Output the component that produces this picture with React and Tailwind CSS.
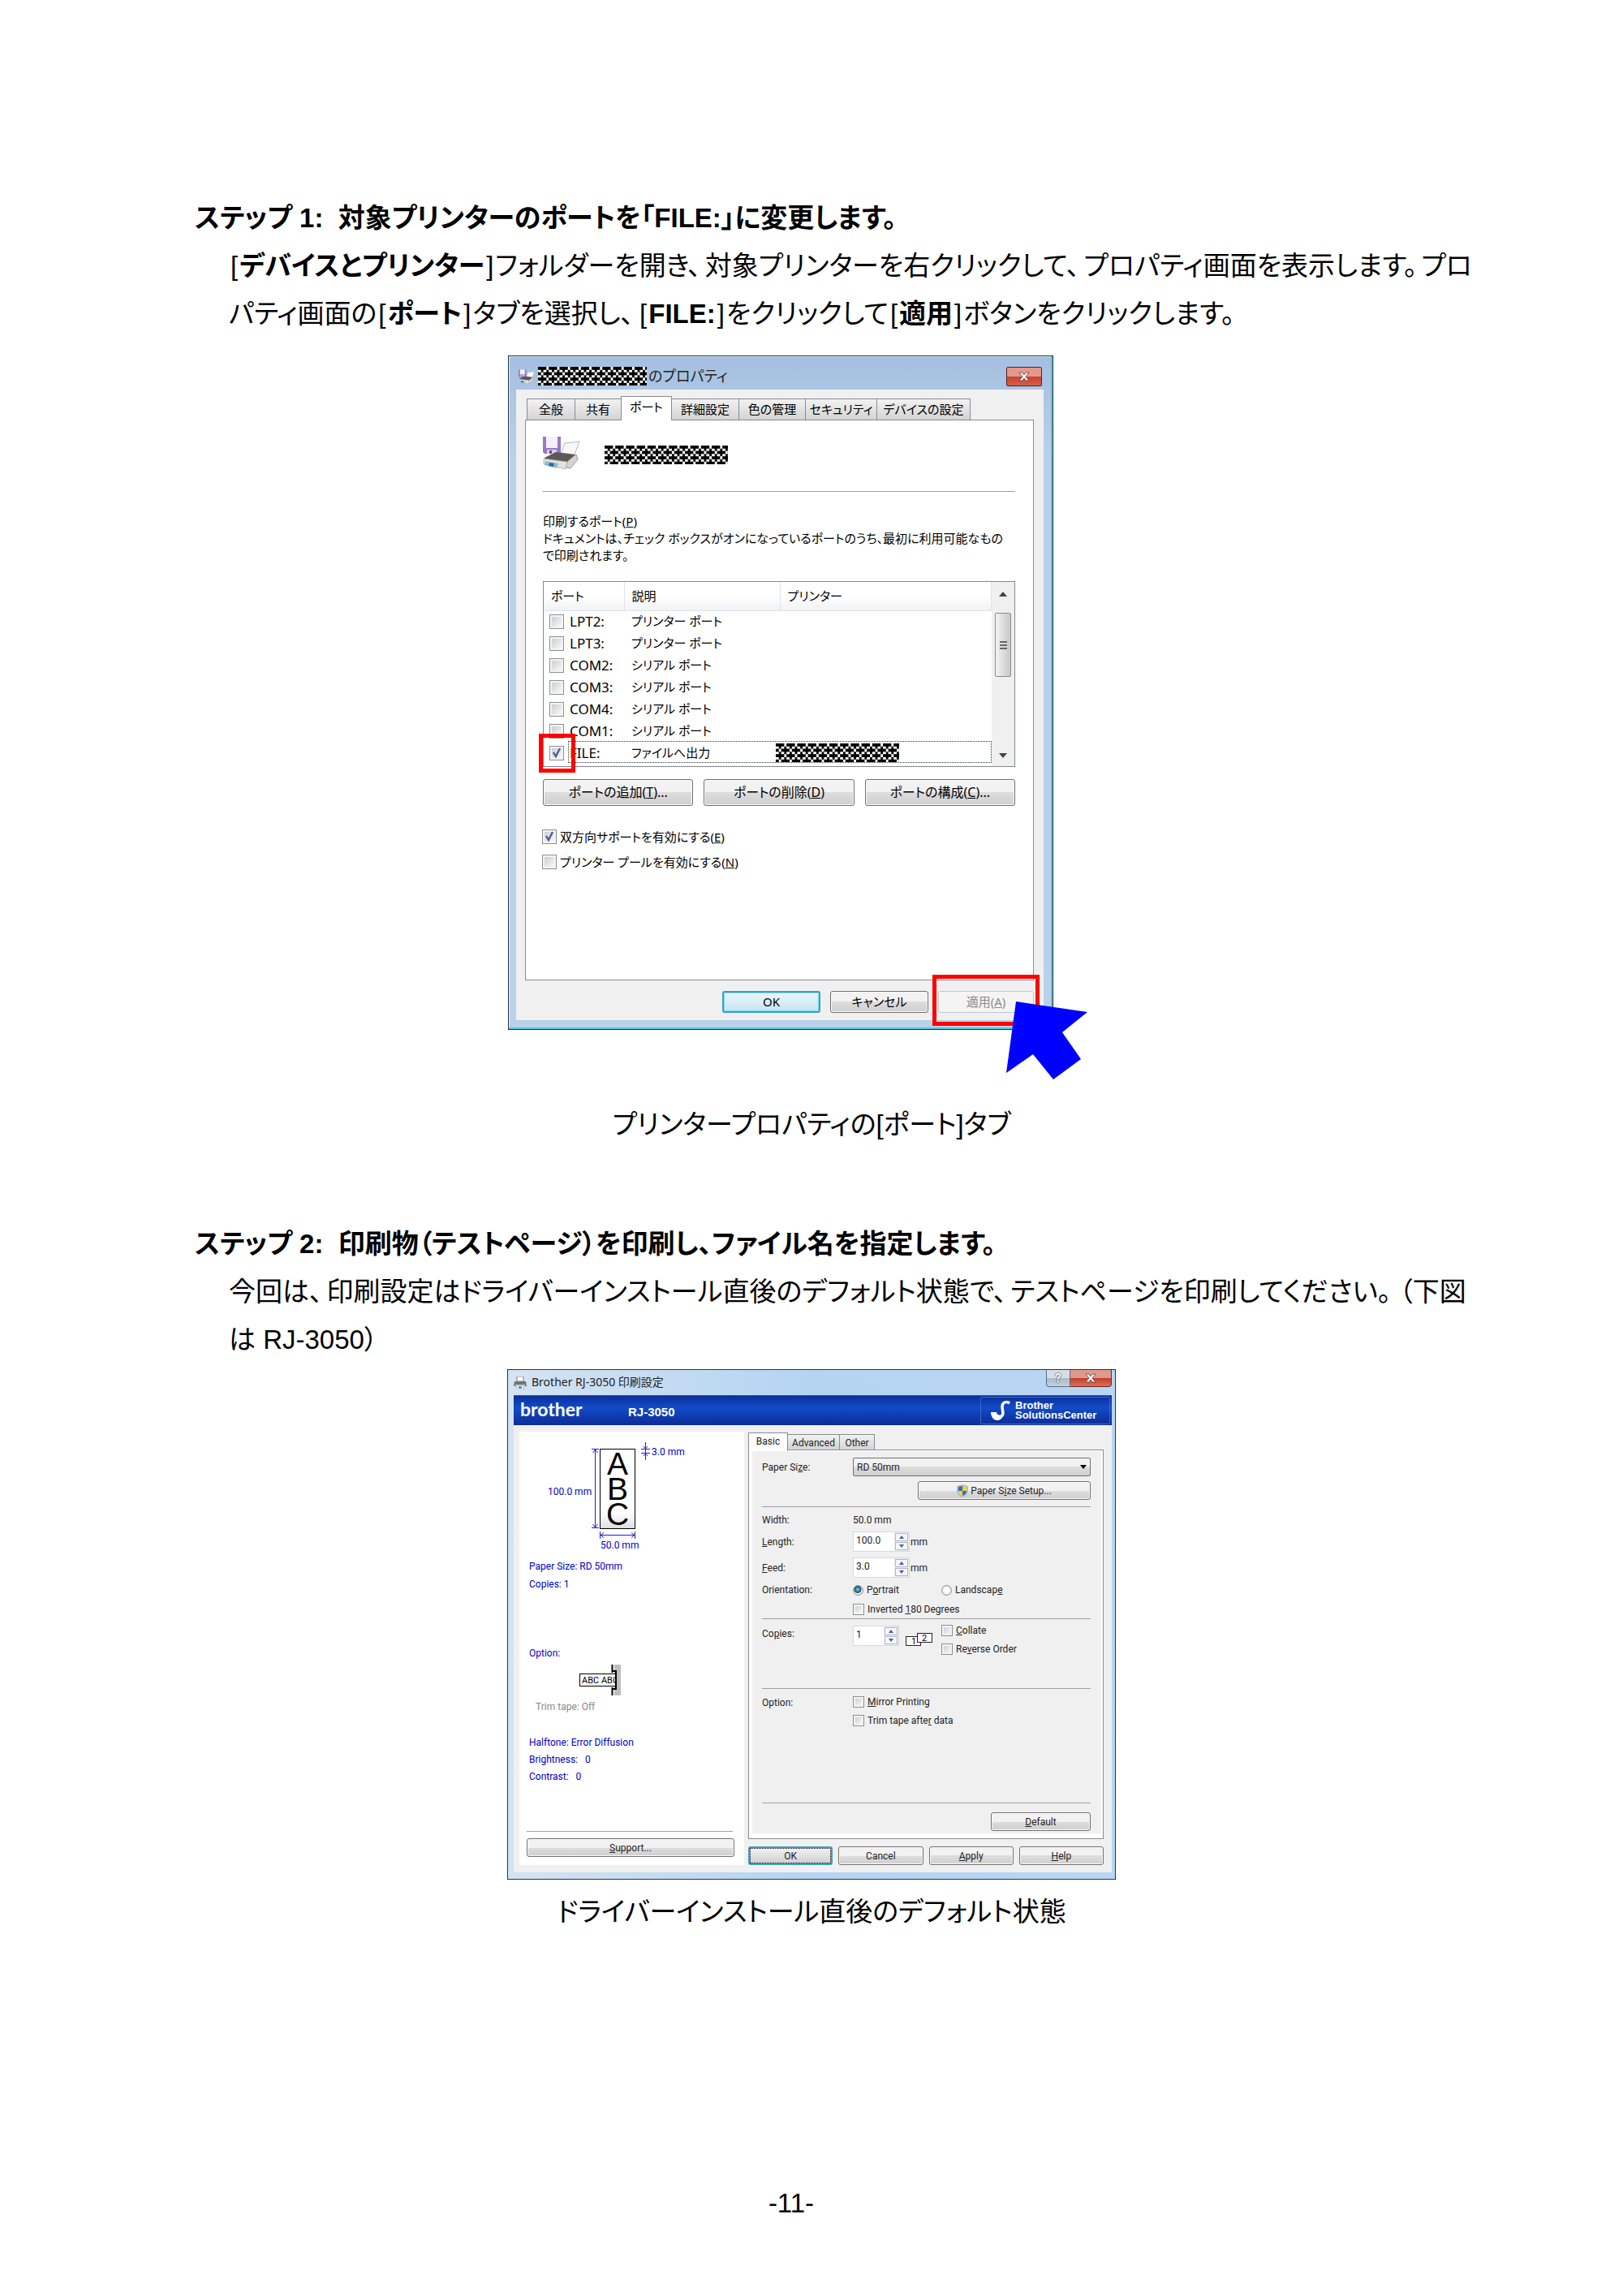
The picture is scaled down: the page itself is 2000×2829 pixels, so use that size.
const PORTS = [
  { name: "LPT2:", desc: "プリンター ポート" },
  { name: "LPT3:", desc: "プリンター ポート" },
  { name: "COM2:", desc: "シリアル ポート" },
  { name: "COM3:", desc: "シリアル ポート" },
  { name: "COM4:", desc: "シリアル ポート" },
  { name: "COM1:", desc: "シリアル ポート" },
  { name: "FILE:", desc: "ファイルへ出力", selected: true },
];

const PROPERTY_TABS = [
  { label: "全般", width: "w-[60px]" },
  { label: "共有", width: "w-[58px]" },
  { label: "ポート", width: "w-[63px]", active: true },
  { label: "詳細設定", width: "w-[84px]" },
  { label: "色の管理", width: "w-[83px]" },
  { label: "セキュリティ", width: "w-[89px]" },
  { label: "デバイスの設定", width: "w-[116px]" },
];

// Gives brackets and punctuation in running text some air of their own.
function Prose({ children }) {
  return children.split(/([[\]、。（])/).map((part, i) => {
    if (part === "[" || part === "]") {
      return (
        <span key={i} className="mx-[2px]">
          {part}
        </span>
      );
    }
    if (part === "（") {
      return (
        <span key={i} className="ml-[5px]">
          {part}
        </span>
      );
    }
    if (part === "、" || part === "。") {
      return (
        <span key={i} className="mr-[5px]">
          {part}
        </span>
      );
    }
    return part;
  });
}

function Mask({ id, className }) {
  return (
    <svg className={className} aria-hidden="true" shapeRendering="crispEdges">
      <defs>
        <pattern id={id} width="4" height="4" patternUnits="userSpaceOnUse" patternTransform="scale(3.3)">
          <rect width="4" height="4" fill="#000" />
          <path d="M3 0h1v1h-1zM0 1h1v1h-1zM2 1h1v1h-1zM1 2h1v1h-1zM0 3h1v1h-1zM2 3h1v1h-1z" fill="#fff" />
        </pattern>
      </defs>
      <rect width="100%" height="100%" fill={`url(#${id})`} />
    </svg>
  );
}

function CheckBox({ id, checked, className = "w-[18px] h-[18px]" }) {
  return (
    <span className="inline-grid shrink-0">
      <input
        id={id}
        type="checkbox"
        defaultChecked={checked}
        className={`peer appearance-none [grid-area:1/1] border border-[#8e8f8f] bg-linear-to-br from-[#c4c8cc] to-white shadow-[inset_0_0_0_2px_#f4f4f4] ${className}`}
      />
      <svg
        viewBox="0 0 18 18"
        className={`[grid-area:1/1] pointer-events-none opacity-0 peer-checked:opacity-100 ${className}`}
      >
        <path d="M5 8l3 5 5-10" fill="none" stroke="#4a5f97" strokeWidth="2.4" />
      </svg>
    </span>
  );
}

function WinButton({ children, className = "" }) {
  return (
    <button
      className={`border border-[#707070] rounded-[3px] bg-linear-to-b from-[#f2f2f2] from-50% via-[#dddddd] via-50% to-[#cfcfcf] shadow-[inset_0_0_0_1px_#fafafa] whitespace-nowrap ${className}`}
    >
      {children}
    </button>
  );
}

function CloseGlyph() {
  return (
    <svg viewBox="0 0 14 12" className="w-[14px] h-3">
      <path d="M1 1h4l2 3 2-3h4L9 6l4 5H9L7 8l-2 3H1l4-5z" fill="#fff" stroke="#5b3a3a" strokeWidth="0.8" />
    </svg>
  );
}

function FilePrinterIcon({ className }) {
  return (
    <svg viewBox="0 0 46 42" className={className} aria-hidden="true">
      <path d="M0 1h22v21H2l-2-2z" fill="#9a78c4" />
      <path d="M4 1h14v14H4z" fill="#f4f0fa" />
      <path d="M5 17h12v5H5z" fill="#d9cdea" />
      <path d="M8 18h3v4H8z" fill="#6a469c" />
      <path d="M27 9l18-2-7 19-16-3z" fill="#f7f7f7" stroke="#b9b9b9" />
      <path d="M2 27l14-7 24 3-10 9-27-2z" fill="#5c5856" />
      <path d="M30 32l11-9 2 6-9 11-6-1z" fill="#d4d4d4" stroke="#999" />
      <path d="M1 28l29 4-2 9-27-6z" fill="#e2e2e2" stroke="#999" strokeWidth="0.6" />
      <path d="M3 31l16 3-2 6-15-4z" fill="#8dbcd6" />
      <path d="M8 33l6 1-1 4-6-1z" fill="#2d6d9c" />
    </svg>
  );
}

function PropertiesDialog() {
  return (
    <section className="relative ml-px w-[672px] border border-[#20323e] bg-linear-to-b from-[#a4bfe0] from-0% to-[#b9d1ea] to-15% pl-[9px] pr-[11px] pb-[11px] shadow-[inset_-2px_-2px_0_#59c4dc,inset_1px_1px_0_#dcebf8] text-[16px] leading-[21px] text-black [font-family:'Noto_Sans','Noto_Sans_CJK_JP',sans-serif] [font-feature-settings:'palt']">
      <header className="h-[41px] flex items-center pl-[3px] pr-[2px] pt-2">
        <FilePrinterIcon className="w-5 h-[22px] shrink-0" />
        <Mask id="mask-title" className="ml-1 w-[134px] h-[23px] shrink-0" />
        <h2 className="ml-[2px] flex-1 text-[18px] text-[#222]">のプロパティ</h2>
        <button
          aria-label="閉じる"
          className="w-11 h-6 flex items-center justify-center rounded-[2px] border border-[#5a2020] bg-linear-to-b from-[#e5978b] from-50% via-[#c8402c] via-50% to-[#d4604a]"
        >
          <CloseGlyph />
        </button>
      </header>

      <div className="bg-[#f0f0f0] pl-[11px] pr-3 pt-2">
        <div role="tablist" className="h-[29px] flex items-end pl-[3px] text-[15px]">
          {PROPERTY_TABS.map((tab) => (
            <button
              key={tab.label}
              role="tab"
              aria-selected={Boolean(tab.active)}
              className={`${tab.width} -ml-px border border-b-0 border-[#898c95] whitespace-nowrap ${
                tab.active
                  ? "h-[30px] -mb-px relative bg-white pb-1"
                  : "h-[26px] bg-linear-to-b from-[#f2f2f2] to-[#d4d4d4]"
              }`}
            >
              {tab.label}
            </button>
          ))}
        </div>

        <div className="h-[691px] bg-white border border-[#898c95] pl-[21px] pr-[22px]">
          <div className="pt-[19px] flex">
            <FilePrinterIcon className="w-[46px] h-[42px]" />
            <Mask id="mask-name" className="ml-[30px] mt-3 w-[152px] h-[23px]" />
          </div>
          <hr className="mt-[26px] border-[#a0a0a0]" />

          <div className="mt-[26px] text-[15px] whitespace-nowrap">
            <p>
              印刷するポート(<u>P</u>)
            </p>
            <p>
              ドキュメントは、チェック ボックスがオンになっているポートのうち、最初に利用可能なもの
              <br />
              で印刷されます。
            </p>
          </div>

          <div className="relative mt-[21px] h-[229px] border border-[#828790] flex">
            <table className="flex-1 self-start table-fixed border-collapse text-left text-[15px]">
              <thead>
                <tr className="h-[35px] bg-linear-to-b from-white from-50% to-[#f1f2f4]">
                  <th className="w-[99px] p-0 pl-[9px] font-normal border-r border-b border-[#e0e3e8]">ポート</th>
                  <th className="w-[192px] p-0 pl-[9px] font-normal border-r border-b border-[#e0e3e8]">説明</th>
                  <th className="p-0 pl-[9px] font-normal border-r border-b border-[#e0e3e8]">プリンター</th>
                </tr>
              </thead>
              <tbody>
                {PORTS.map((port) => (
                  <tr key={port.name} className="h-[27px]">
                    <td className="p-0 pl-[7px]">
                      <span className="flex items-center gap-[7px] text-[17px]">
                        <CheckBox id={port.name} checked={port.selected} />
                        <label htmlFor={port.name}>{port.name}</label>
                      </span>
                    </td>
                    <td className="p-0 pl-[9px] whitespace-nowrap">{port.desc}</td>
                    <td className="p-0">
                      {port.selected && <Mask id="mask-port" className="-ml-[5px] w-[152px] h-[23px]" />}
                    </td>
                  </tr>
                ))}
              </tbody>
            </table>
            <div className="w-7 bg-[#f0f0f0] flex flex-col items-center pb-[10px] pt-3 px-1">
              <svg viewBox="0 0 10 6" className="w-[10px] h-[6px]">
                <path d="M0 6l5-6 5 6z" fill="#444" />
              </svg>
              <div className="mt-5 w-full h-[79px] border border-[#8b8b8b] rounded-[2px] bg-linear-to-r from-[#f3f3f3] to-[#c8c8cc] flex flex-col items-center justify-center gap-[2px]">
                <i className="w-[9px] h-[2px] bg-[#666]" />
                <i className="w-[9px] h-[2px] bg-[#666]" />
                <i className="w-[9px] h-[2px] bg-[#666]" />
              </div>
              <svg viewBox="0 0 10 6" className="mt-auto w-[10px] h-[6px]">
                <path d="M0 0l5 6 5-6z" fill="#444" />
              </svg>
            </div>
            <div className="absolute left-[30px] right-7 bottom-[4px] h-[27px] border border-dotted border-[#333]" />
            <div className="absolute -left-[6px] -bottom-2 w-[45px] h-12 border-[5px] border-[#f00]" />
          </div>

          <div className="mt-[15px] grid grid-cols-3 gap-[13px]">
            <WinButton className="h-[33px]">
              ポートの追加(<u>T</u>)...
            </WinButton>
            <WinButton className="h-[33px]">
              ポートの削除(<u>D</u>)
            </WinButton>
            <WinButton className="h-[33px]">
              ポートの構成(<u>C</u>)...
            </WinButton>
          </div>

          <div className="mt-[25px] flex flex-col gap-[5px] -ml-px text-[15px] leading-[26px]">
            <div className="flex items-center gap-1">
              <CheckBox id="bidi" checked />
              <label htmlFor="bidi">
                双方向サポートを有効にする(<u>E</u>)
              </label>
            </div>
            <div className="flex items-center gap-1">
              <CheckBox id="pool" />
              <label htmlFor="pool">
                プリンター プールを有効にする(<u>N</u>)
              </label>
            </div>
          </div>
        </div>

        <footer className="h-[49px] pt-[13px] flex justify-end gap-3 text-[15px]">
          <button className="w-[121px] h-[27px] rounded-[3px] border-2 border-[#3c9fc4] bg-linear-to-b from-[#eaf6fb] to-[#c5e4f1] shadow-[inset_0_0_0_1px_#7fdcf5]">
            OK
          </button>
          <WinButton className="w-[121px] h-[27px]">キャンセル</WinButton>
          <button
            disabled
            className="w-[118px] h-[27px] rounded-[3px] border border-[#c4c6c8] bg-[#f4f4f4] text-[#8a8a8a]"
          >
            適用(<u>A</u>)
          </button>
        </footer>
      </div>

      <div className="absolute right-4 bottom-1 w-[132px] h-[63px] border-[5px] border-[#f00]" />
      <svg viewBox="0 0 100 114" className="absolute -right-[43px] -bottom-[66px] w-[100px] h-[114px]">
        <path d="M12 14L100 27 69 52 92 85 58 110 33 79 0 102z" fill="#00f" />
      </svg>
    </section>
  );
}

function LabelDiagram() {
  return (
    <svg viewBox="0 0 277 152" className="block w-[277px] h-[152px]">
      <defs>
        <linearGradient id="paper" x2="0" y2="1">
          <stop offset="0.8" stopColor="#fff" />
          <stop offset="1" stopColor="#ddd" />
        </linearGradient>
      </defs>
      <rect x="99.5" y="21.5" width="43" height="98" fill="url(#paper)" stroke="#000" />
      <g className="[font-family:'Liberation_Sans',sans-serif]" fontSize="39" textAnchor="middle">
        <text x="121" y="53">A</text>
        <text x="121" y="84">B</text>
        <text x="121" y="115">C</text>
      </g>
      <g fill="none" stroke="#2020d8">
        <path d="M89 21.5h9M89 118.5h9M93.5 22v96M90.5 26l3-4 3 4M90.5 114l3 4 3-4" />
        <path d="M99.5 123v9M142.5 123v9M100 127.5h42M104 124.5l-4 3 4 3M138 124.5l4 3-4 3" />
        <path d="M150 21.5h11M150 26.5h11M155.5 13v22M153 18l2.5 3 2.5-3M153 30l2.5-3 2.5 3" />
      </g>
      <g fill="#0000c8" fontSize="12">
        <text x="35" y="78">100.0 mm</text>
        <text x="163" y="29">3.0 mm</text>
        <text x="100" y="144">50.0 mm</text>
      </g>
    </svg>
  );
}

function Spinner({ id, value, width = "w-[70px]" }) {
  return (
    <div className={`${width} h-[25px] flex border border-[#d4d8de] bg-white`}>
      <input id={id} defaultValue={value} className="min-w-0 flex-1 pl-[3px] pb-[3px] bg-white" />
      <div className="w-[18px] flex flex-col gap-px p-px bg-[#eceef2]">
        <button aria-label="Up" className="flex-1 flex items-center justify-center border border-[#b4b8c4] bg-[#f4f5f8]">
          <svg viewBox="0 0 6 4" className="w-[6px] h-1">
            <path d="M0 4l3-4 3 4z" fill="#4a5fa8" />
          </svg>
        </button>
        <button aria-label="Down" className="flex-1 flex items-center justify-center border border-[#b4b8c4] bg-[#f4f5f8]">
          <svg viewBox="0 0 6 4" className="w-[6px] h-1">
            <path d="M0 0l3 4 3-4z" fill="#4a5fa8" />
          </svg>
        </button>
      </div>
    </div>
  );
}

function Radio({ id, checked }) {
  return (
    <input
      id={id}
      type="radio"
      name="orientation"
      defaultChecked={checked}
      className="appearance-none w-[13px] h-[13px] rounded-full border border-[#8e8f8f] bg-[radial-gradient(circle,#fff_30%,#d0d0d0)] checked:bg-[radial-gradient(circle_at_45%_40%,#6fc3e0_8%,#134a6e_45%,#e8e8e8_55%)]"
    />
  );
}

const SMALL_BOX = "w-[14px] h-[14px]";

function BasicTab() {
  return (
    <div className="bg-[#f0f0f0] pl-3 pr-[13px] pt-2 pb-[3px]">
      <div className="h-[23px] flex items-center">
        <label htmlFor="paper-size" className="w-28">
          Paper Si<u>z</u>e:
        </label>
        <div className="relative flex-1 h-full">
          <select
            id="paper-size"
            className="appearance-none w-full h-full pl-1 rounded-[2px] border border-[#707070] bg-linear-to-b from-[#f2f2f2] from-50% via-[#dddddd] via-50% to-[#cfcfcf]"
          >
            <option>RD 50mm</option>
          </select>
          <svg viewBox="0 0 8 5" className="absolute right-[5px] top-[9px] w-2 h-[5px] pointer-events-none">
            <path d="M0 0h8L4 5z" fill="#000" />
          </svg>
        </div>
      </div>
      <div className="mt-[6px] flex justify-end">
        <WinButton className="w-[213px] h-[23px] flex items-center justify-center gap-[3px]">
          <svg viewBox="0 0 14 16" className="w-[14px] h-4">
            <path d="M7 0l7 2v6c0 4-3 7-7 8-4-1-7-4-7-8V2z" fill="#b8bcc4" />
            <path d="M7 2v6H2V3z" fill="#2a70c8" />
            <path d="M7 2l5 1v5H7z" fill="#f6d330" />
            <path d="M2 8h5v6c-3-1-5-3-5-6z" fill="#f6d330" />
            <path d="M12 8H7v6c3-1 5-3 5-6z" fill="#2a70c8" />
          </svg>
          <span>
            Paper S<u>i</u>ze Setup...
          </span>
        </WinButton>
      </div>
      <hr className="mt-2 border-[#a0a0a0]" />

      <div className="mt-[5px] h-[22px] flex items-center">
        <span className="w-28">Width:</span>
        <span>50.0 mm</span>
      </div>
      <div className="mt-[3px] flex items-center">
        <label htmlFor="length" className="w-28">
          <u>L</u>ength:
        </label>
        <Spinner id="length" value="100.0" />
        <span className="ml-px">mm</span>
      </div>
      <div className="mt-[7px] flex items-center">
        <label htmlFor="feed" className="w-28">
          <u>F</u>eed:
        </label>
        <Spinner id="feed" value="3.0" />
        <span className="ml-px">mm</span>
      </div>
      <div className="mt-[5px] h-5 flex items-center">
        <span className="w-28">Orientation:</span>
        <span className="w-[109px] flex items-center gap-1">
          <Radio id="portrait" checked />
          <label htmlFor="portrait">
            P<u>o</u>rtrait
          </label>
        </span>
        <Radio id="landscape" />
        <label htmlFor="landscape" className="ml-1">
          Landscap<u>e</u>
        </label>
      </div>
      <div className="mt-1 h-5 pl-28 flex items-center gap-1">
        <CheckBox id="inverted" className={SMALL_BOX} />
        <label htmlFor="inverted">
          Inverted <u>1</u>80 Degrees
        </label>
      </div>
      <hr className="mt-px border-[#a0a0a0]" />

      <div className="mt-1 h-[43px] flex items-start">
        <label htmlFor="copies" className="w-28 leading-7">
          Co<u>p</u>ies:
        </label>
        <div className="pt-1">
          <Spinner id="copies" value="1" width="w-[57px]" />
        </div>
        <svg viewBox="0 0 34 18" className="ml-2 mt-3 w-[34px] h-[18px]">
          <rect x="0.5" y="5.5" width="18" height="11" fill="#fff" stroke="#222" />
          <text x="7" y="15" fontSize="11">1</text>
          <rect x="14.5" y="1.5" width="18" height="11" fill="#fff" stroke="#222" />
          <text x="20" y="11" fontSize="11">2</text>
        </svg>
        <div className="ml-[10px] flex flex-col gap-[3px]">
          <span className="h-5 flex items-center gap-1">
            <CheckBox id="collate" className={SMALL_BOX} />
            <label htmlFor="collate">
              <u>C</u>ollate
            </label>
          </span>
          <span className="h-5 flex items-center gap-1">
            <CheckBox id="reverse" className={SMALL_BOX} />
            <label htmlFor="reverse">
              Re<u>v</u>erse Order
            </label>
          </span>
        </div>
      </div>
      <hr className="mt-[38px] border-[#a0a0a0]" />

      <div className="mt-[6px] flex">
        <span className="w-28 leading-[22px]">Option:</span>
        <div className="flex flex-col gap-[3px]">
          <span className="h-5 flex items-center gap-1">
            <CheckBox id="mirror" className={SMALL_BOX} />
            <label htmlFor="mirror">
              <u>M</u>irror Printing
            </label>
          </span>
          <span className="h-5 flex items-center gap-1">
            <CheckBox id="trim" className={SMALL_BOX} />
            <label htmlFor="trim">
              Trim tape afte<u>r</u> data
            </label>
          </span>
        </div>
      </div>
      <hr className="mt-[91px] border-[#a0a0a0]" />
      <div className="mt-[11px] flex justify-end">
        <WinButton className="w-[123px] h-[23px]">
          <u>D</u>efault
        </WinButton>
      </div>
    </div>
  );
}

function PrintSettingsDialog() {
  return (
    <section className="w-full border border-[#2a333c] bg-linear-to-r from-[#d4e3f2] via-[#b4d4f2] to-[#b9d6f4] pl-[7px] pr-1 pb-2 text-[12px] leading-5 text-[#222] [font-family:Roboto,sans-serif]">
      <header className="h-[31px] flex items-start">
        <svg viewBox="0 0 16 16" className="mt-2 w-4 h-4">
          <path d="M4 0h8v6H4z" fill="#fff" stroke="#888" />
          <path d="M1 6h14l1 6H0z" fill="#707478" />
          <path d="M2 10h12v3H2z" fill="#c8ccd0" />
          <path d="M4 11h8v5H4z" fill="#fff" stroke="#999" strokeWidth="0.6" />
          <path d="M6 12h4v3H6z" fill="#3c9fc4" />
        </svg>
        <h2 className="ml-[6px] mt-[3px] flex-1 text-[14px] leading-6 text-[#222] [font-family:'Noto_Sans','Noto_Sans_CJK_JP',sans-serif]">
          Brother RJ-3050 印刷設定
        </h2>
        <button
          aria-label="Help"
          className="w-[30px] h-[21px] flex items-center justify-center border border-t-0 border-[#5e6c7c] rounded-bl-[4px] bg-linear-to-b from-[#d6dee8] from-50% via-[#aab8c8] via-50% to-[#c2d2e2]"
        >
          <span className="font-bold text-[15px] leading-5 text-white [text-shadow:0_0_2px_#333,0_0_1px_#333]">?</span>
        </button>
        <button
          aria-label="Close"
          className="w-[51px] h-[21px] flex items-center justify-center border border-t-0 border-l-0 border-[#6a2a24] rounded-br-[4px] bg-linear-to-b from-[#e09a8c] from-50% via-[#c43a24] via-50% to-[#d8725c]"
        >
          <CloseGlyph />
        </button>
      </header>

      <div className="bg-[#f0f0f0]">
        <div className="h-[37px] flex items-center justify-between pl-2 pr-[2px] text-white bg-linear-to-b from-[#0c2f9c] via-[#124bc8] via-40% to-[#0c2c96] border-t border-[#3b4c80] [font-family:'Liberation_Sans',sans-serif]">
          <div className="flex items-center">
            <span className="w-[133px] text-[23px] font-bold leading-6 pb-1 [font-family:Lato,sans-serif]">brother</span>
            <span className="text-[15px] font-bold leading-5 pt-1">RJ-3050</span>
          </div>
          <a
            href="#solutions"
            className="h-[34px] w-40 flex items-center gap-[6px] pl-3 rounded-[2px] border border-[#3f68cc] whitespace-nowrap"
          >
            <svg viewBox="0 0 24 24" className="w-6 h-6 shrink-0">
              <path d="M23 3c-4-3-9-1-9 4 0 6 3 10-2 13" fill="none" stroke="#fff" strokeWidth="3.5" />
              <path d="M0 14h7c0 4 5 5 9 1-1 6-4 9-8 9-5 0-8-5-8-10z" fill="#fff" />
            </svg>
            <span className="text-[13px] font-bold leading-3">
              Brother
              <br />
              SolutionsCenter
            </span>
          </a>
        </div>

        <div className="flex pt-2 pb-[9px] pl-[7px] pr-[10px]">
          <div className="w-[277px] shrink-0 bg-white text-[#0000c8]">
            <LabelDiagram />
            <div className="pl-3 pt-[3px] leading-[22px]">
              <p>Paper Size: RD 50mm</p>
              <p>Copies: 1</p>
              <p className="mt-[63px]">Option:</p>
              <svg viewBox="0 0 52 40" className="mt-[2px] ml-[62px] w-[52px] h-10">
                <clipPath id="tape">
                  <rect x="0" y="12" width="44" height="16" />
                </clipPath>
                <path d="M43 1h8v38h-8z" fill="#bfbfbf" />
                <rect x="0.5" y="12.5" width="44" height="15" fill="#fff" stroke="#000" />
                <text x="3" y="24" fontSize="11" fill="#000" clipPath="url(#tape)">
                  ABC ABC
                </text>
                <path d="M40.5 1v10M40.5 29v10M41 9h4v22h-4" fill="none" stroke="#000" strokeWidth="2" />
              </svg>
              <p className="pl-2 mt-[2px] text-[#8a8a8a]">Trim tape: Off</p>
              <div className="mt-[23px] leading-[21px] whitespace-pre">
                <p>Halftone: Error Diffusion</p>
                <p>{"Brightness:   0"}</p>
                <p>{"Contrast:   0"}</p>
              </div>
            </div>
            <hr className="mt-[56px] ml-[9px] mr-[14px] border-[#a0a0a0]" />
            <div className="pt-2 pl-[9px] pr-3 flex text-[#222]">
              <WinButton className="flex-1 h-[23px]">
                <u>S</u>upport...
              </WinButton>
            </div>
          </div>

          <div className="ml-[5px] flex-1 pt-px">
            <div role="tablist" className="h-[21px] flex items-end">
              <button
                role="tab"
                aria-selected="true"
                className="relative -mb-[2px] h-[23px] w-[49px] pb-[2px] bg-white border border-b-0 border-[#898c95]"
              >
                Basic
              </button>
              <button
                role="tab"
                className="h-[19px] w-16 bg-linear-to-b from-[#f2f2f2] to-[#d4d4d4] border border-b-0 border-l-0 border-[#898c95]"
              >
                Advanced
              </button>
              <button
                role="tab"
                className="h-[19px] w-[43px] bg-linear-to-b from-[#f2f2f2] to-[#d4d4d4] border border-b-0 border-l-0 border-[#898c95]"
              >
                Other
              </button>
            </div>
            <div className="border border-[#898c95] bg-white pt-px pl-1 pr-[2px] pb-[6px]">
              <BasicTab />
            </div>
            <div className="mt-[9px] grid grid-cols-4 gap-[7px]">
              <button className="h-[23px] rounded-[3px] border-2 border-[#3c9fc4] bg-linear-to-b from-[#f2f2f2] to-[#cfcfcf] outline-1 outline-dotted -outline-offset-3 outline-black leading-4">
                OK
              </button>
              <WinButton className="h-[23px]">Cancel</WinButton>
              <WinButton className="h-[23px]">
                <u>A</u>pply
              </WinButton>
              <WinButton className="h-[23px]">
                <u>H</u>elp
              </WinButton>
            </div>
          </div>
        </div>
      </div>
    </section>
  );
}

export default function App() {
  return (
    <main
      lang="ja"
      className="bg-white text-black pt-[239px] pb-[84px] text-[33px] leading-[59px] [font-family:'Liberation_Sans','Noto_Sans_CJK_JP',sans-serif]"
    >
      <section className="pl-60 [font-feature-settings:'palt']">
        <h1 className="font-bold">ステップ 1:&nbsp; 対象プリンターのポートを「FILE:」に変更します。</h1>
        <p className="pl-[42px]">
          <Prose>[</Prose>
          <b>デバイスとプリンター</b>
          <Prose>]フォルダーを開き、対象プリンターを右クリックして、プロパティ画面を表示します。プロ</Prose>
          <br />
          <Prose>パティ画面の[</Prose>
          <b>ポート</b>
          <Prose>]タブを選択し、[</Prose>
          <b>FILE:</b>
          <Prose>]をクリックして[</Prose>
          <b>適用</b>
          <Prose>]ボタンをクリックします。</Prose>
        </p>
      </section>

      <figure className="mt-[22px] mx-auto w-[750px]">
        <PropertiesDialog />
        <figcaption className="mt-[87px] text-center [font-feature-settings:'palt']">
          プリンタープロパティの[ポート]タブ
        </figcaption>
      </figure>

      <section className="mt-[88px] pl-60 [font-feature-settings:'palt']">
        <h1 className="font-bold">ステップ 2:&nbsp; 印刷物（テストページ）を印刷し、ファイル名を指定します。</h1>
        <p className="pl-[42px]">
          <Prose>
            今回は、印刷設定はドライバーインストール直後のデフォルト状態で、テストページを印刷してください。（下図
          </Prose>
          <br />は RJ-3050）
        </p>
      </section>

      <figure className="mt-[7px] mx-auto w-[750px]">
        <PrintSettingsDialog />
        <figcaption className="mt-[10px] text-center [font-feature-settings:'palt']">
          ドライバーインストール直後のデフォルト状態
        </figcaption>
      </figure>

      <footer className="mt-[300px] pr-[50px] text-center">-11-</footer>
    </main>
  );
}
